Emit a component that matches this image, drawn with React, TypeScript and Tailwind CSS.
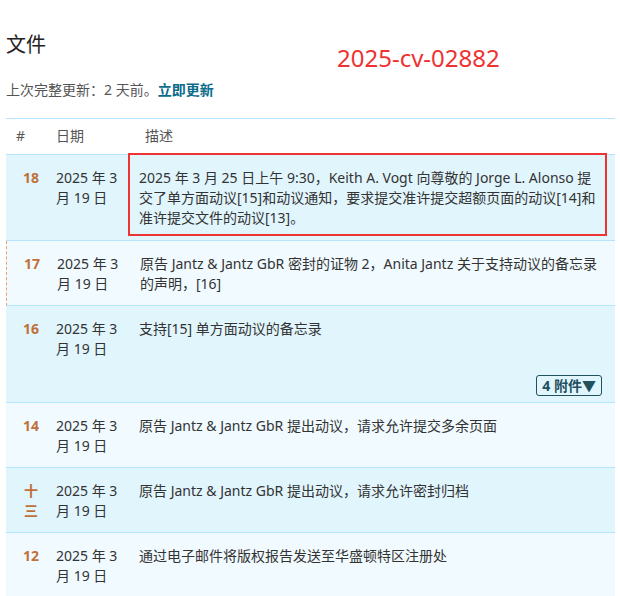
const rows = [
  { n: "18", desc: "2025 年 3 月 25 日上午 9:30，Keith A. Vogt 向尊敬的 Jorge L. Alonso 提交了单方面动议[15]和动议通知，要求提交准许提交超额页面的动议[14]和准许提交文件的动议[13]。", bg: "bg-[#e1f5fd]", box: true },
  { n: "17", desc: "原告 Jantz & Jantz GbR 密封的证物 2，Anita Jantz 关于支持动议的备忘录的声明，[16]", bg: "bg-[#f0faff]", dashed: true },
  { n: "16", desc: "支持[15] 单方面动议的备忘录", bg: "bg-[#e1f5fd]", att: true },
  { n: "14", desc: "原告 Jantz & Jantz GbR 提出动议，请求允许提交多余页面", bg: "bg-[#f0faff]" },
  { n: "十三", desc: "原告 Jantz & Jantz GbR 提出动议，请求允许密封归档", bg: "bg-[#e1f5fd]" },
  { n: "12", desc: "通过电子邮件将版权报告发送至华盛顿特区注册处", bg: "bg-[#f0faff]" },
];

export default function App() {
  return (
    <div className="w-[620px] h-[596px] overflow-hidden bg-white text-[#333] text-[14px] leading-[20px]" style={{ fontFamily: '"Noto Sans", "Noto Sans CJK SC", sans-serif' }}>
      <div className="pl-[6px] pr-[5px]">
        <div className="relative h-[118px]">
          <div className="absolute left-0 top-[35px] text-[20px] text-[#222]">文件</div>
          <div className="absolute left-[331px] top-[48px] text-[24px] text-[#ee3333]">2025-cv-02882</div>
          <div className="absolute left-0 top-[80px] text-[#555]">上次完整更新：2 天前。<span className="font-bold text-[#0a6b8c]">立即更新</span></div>
          <div className="absolute left-0 right-0 bottom-[-1px] border-t border-[#b3e5fc]" />
        </div>
        <div className="flex h-[37px] items-center text-[#555] border-b border-[#b3e5fc]">
          <div className="w-[50px] pl-[10px]">#</div>
          <div className="w-[84px]">日期</div>
          <div className="pl-[5px]">描述</div>
        </div>
        {rows.map((r, i) => (
          <div key={i} className={`relative ${r.bg} border-b border-[#b3e5fc]`} style={r.dashed ? { borderLeft: "1px dashed #f0a070" } : undefined}>
            <div className={`flex pt-[13px] ${r.att ? "pb-0" : i === 0 ? "pb-[12px]" : "pb-[11px]"}`}>
              <div className="w-[50px] shrink-0 text-center font-bold text-[#c0703a]">
                {r.n === "十三" ? <span className="inline-block w-[16px]">十三</span> : r.n}
              </div>
              <div className="w-[83px] shrink-0">2025 年 3<br />月 19 日</div>
              <div className="flex-1 pr-[12px]">{r.desc}</div>
            </div>
            {r.att && (
              <div className="flex justify-end pr-[13px] pb-[6px] pt-[16px]">
                <span className="border border-[#21505e] rounded-[3px] px-[5px] font-bold text-[#21505e] text-[14px] leading-[19px]">4 附件▼</span>
              </div>
            )}
            {r.box && <div className="absolute left-[122px] right-[8px] top-[-2px] bottom-[4px] border-2 border-[#ee3333]" />}
          </div>
        ))}
      </div>
    </div>
  );
}
